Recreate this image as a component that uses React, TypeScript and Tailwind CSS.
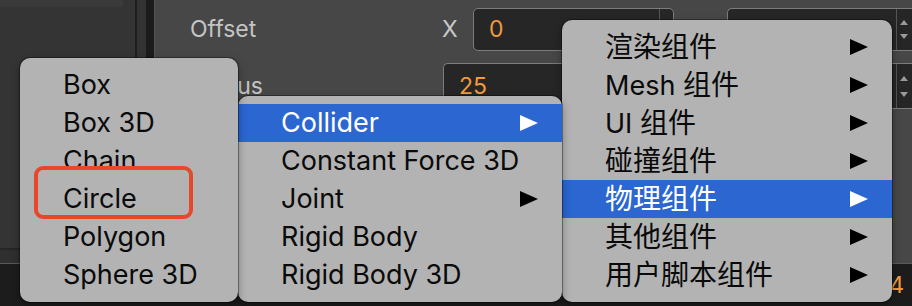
import type { ReactNode } from 'react'

type Item = { label: ReactNode; sub?: boolean; active?: boolean }

const cjk = (s: string) => <span className="text-[28px]">{s}</span>

const menuA: Item[] = [
  { label: 'Box' },
  { label: 'Box 3D' },
  { label: 'Chain' },
  { label: 'Circle' },
  { label: 'Polygon' },
  { label: 'Sphere 3D' },
]

const menuB: Item[] = [
  { label: 'Collider', sub: true, active: true },
  { label: 'Constant Force 3D' },
  { label: 'Joint', sub: true },
  { label: 'Rigid Body' },
  { label: 'Rigid Body 3D' },
]

const menuC: Item[] = [
  { label: cjk('渲染组件'), sub: true },
  { label: <>Mesh {cjk('组件')}</>, sub: true },
  { label: <>UI {cjk('组件')}</>, sub: true },
  { label: cjk('碰撞组件'), sub: true },
  { label: cjk('物理组件'), sub: true, active: true },
  { label: cjk('其他组件'), sub: true },
  { label: cjk('用户脚本组件'), sub: true },
]

const Arrow = ({ active }: { active?: boolean }) => (
  <svg width="18" height="16" viewBox="0 0 18 16" className="shrink-0">
    <polygon points="0,0 18,8 0,16" fill={active ? '#ffffff' : '#000000'} />
  </svg>
)

const Menu = ({ items, className }: { items: Item[]; className: string }) => (
  <div
    className={`absolute flex flex-col rounded-[10px] bg-[#b3b3b3] py-[8px] shadow-[0_0_0_1px_rgba(0,0,0,0.35),0_4px_10px_rgba(0,0,0,0.35)] ${className}`}
  >
    {items.map((item, i) => (
      <div
        key={i}
        className={`flex h-[38px] items-center justify-between pb-[1px] pl-[43px] pr-[24px] text-[27px] leading-none ${
          item.active ? 'bg-[#2b66d1] text-white' : 'text-[#0a0a0a]'
        }`}
      >
        <span className="whitespace-nowrap">{item.label}</span>
        {item.sub && <Arrow active={item.active} />}
      </div>
    ))}
  </div>
)

const Spinner = () => (
  <div className="flex h-full w-[14px] flex-col items-center justify-around border-l border-[#555] py-[6px]">
    <svg width="8" height="5" viewBox="0 0 8 5">
      <polygon points="0,5 4,0 8,5" fill="#9a9a9a" />
    </svg>
    <svg width="8" height="5" viewBox="0 0 8 5">
      <polygon points="0,0 8,0 4,5" fill="#9a9a9a" />
    </svg>
  </div>
)

export default function App() {
  return (
    <div
      className="relative flex h-[306px] w-[912px] flex-col overflow-hidden bg-[#1c1c1c]"
      style={{ fontFamily: 'Inter, "Noto Sans CJK SC", sans-serif' }}
    >
      <div className="flex h-[263px] shrink-0">
        {/* left hierarchy panel */}
        <div className="flex w-[135px] flex-col bg-[#343434]">
          <div className="h-[7px] w-[123px] bg-[#3a3a3a]" />
          <div className="flex-1" />
          <div className="h-[2px] bg-[#262626]" />
          <div className="h-[13px] bg-[#2f2f2f]" />
        </div>
        <div className="w-[2px] bg-[#1f1f1f]" />
        <div className="w-[9px] bg-[#333333]" />
        <div className="w-[8px] bg-[#1b1b1b]" />
        <div className="w-[1px] bg-[#555555]" />
        {/* inspector */}
        <div className="flex flex-1 flex-col gap-[12px] bg-[#474747] pl-[35px] pt-[8px] text-[23px] text-[#c4c4c4]">
          <div className="flex h-[43px] items-center">
            <span className="w-[252px]">Offset</span>
            <span className="w-[31px] text-[#c8c8c8]">X</span>
            <div className="flex h-full w-[201px] items-center justify-between rounded-[5px] border border-[#7c7c7c] bg-[#262626] pl-[15px] text-[#f09a3e]">
              <span>0</span>
              <Spinner />
            </div>
            <div className="ml-[53px] flex h-full flex-1 items-center justify-end rounded-l-[5px] border border-r-0 border-[#7c7c7c] bg-[#262626] pr-[2px]">
              <Spinner />
            </div>
          </div>
          <div className="flex h-[46px] items-center">
            <span className="w-[253px]">Radius</span>
            <div className="flex h-full flex-1 items-center justify-between rounded-l-[5px] border border-r-0 border-[#7c7c7c] bg-[#262626] pl-[15px] pr-[2px] text-[#f09a3e]">
              <span>25</span>
              <Spinner />
            </div>
          </div>
        </div>
      </div>
      <div className="h-[1px] bg-[#5a5a5a]" />
      <div className="flex flex-1 items-center justify-end pr-[8px] text-[23px] text-[#f09a3e]">
        <span>2.4</span>
      </div>

      <Menu items={menuC} className="left-[562px] top-[20px] w-[330px]" />
      <Menu items={menuB} className="left-[238px] top-[96px] w-[324px]" />
      <Menu items={menuA} className="left-[20px] top-[58px] w-[218px]" />

      <div className="absolute left-[34px] top-[166px] h-[53px] w-[159px] rounded-[9px] border-4 border-[#e9472c]" />
    </div>
  )
}
